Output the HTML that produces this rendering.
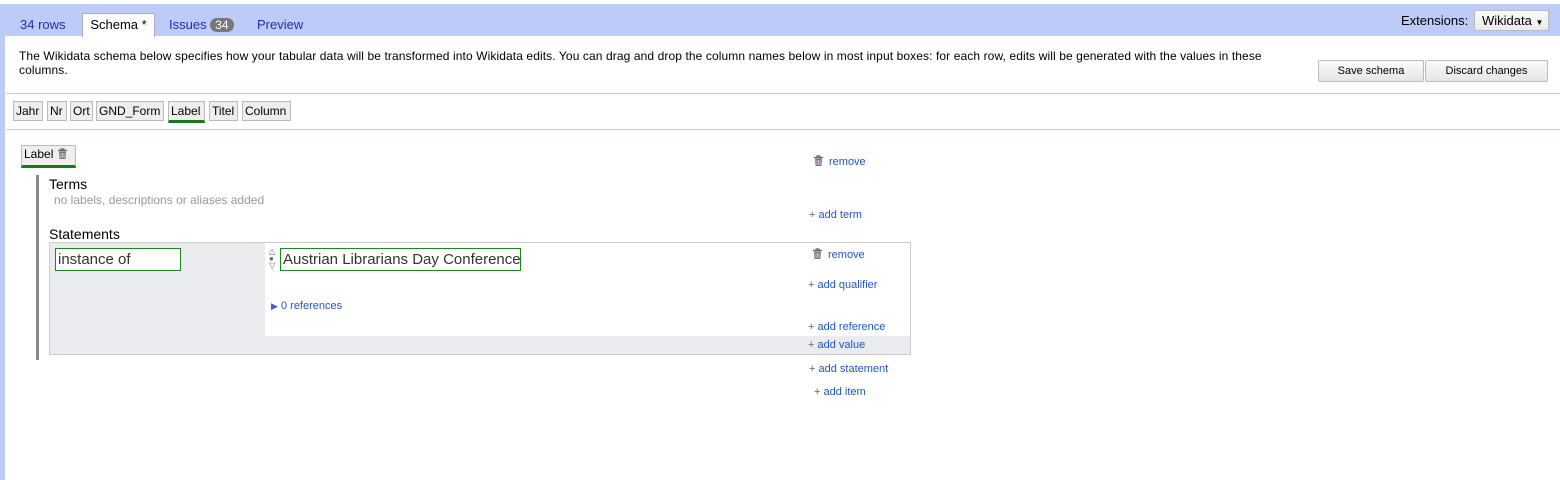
<!DOCTYPE html><html><head><style>
body{margin:0;width:1560px;height:480px;position:relative;overflow:hidden;background:#fff;font-family:"Liberation Sans",sans-serif;}
.a{position:absolute;white-space:nowrap}
.l{font-size:11px;color:#1f56c2}
.p{color:#666}
.chip{position:absolute;top:101px;height:20px;border:1px solid #bbb;background:#eee;font-size:12px;line-height:18px;padding:0 2px;box-sizing:border-box}
.btn{position:absolute;top:60px;height:22px;border:1px solid #bbb;border-radius:2px;background:linear-gradient(#fafafa,#e6e6e6);font-size:11px;line-height:20px;text-align:center;box-sizing:border-box}
svg.t{vertical-align:-2px;margin-right:5px}
</style></head><body>
<svg width="0" height="0" style="position:absolute"><defs><g id="tr"><path d="M1 2.5h9M4 2.5V1h3v1.5" stroke="#666" stroke-width="1.2" fill="none"/><path d="M2 3.5h7l-0.6 7.5h-5.8z" fill="#777"/><path d="M4 5v5M5.5 5v5M7 5v5" stroke="#ddd" stroke-width="0.7"/></g></defs></svg>
<div class="a" style="left:0;top:4px;width:1560px;height:32px;background:#bccbf7"></div>
<div class="a" style="left:0;top:36px;width:5px;height:444px;background:#bccbf7"></div>
<div class="a" style="left:20px;top:17px;font-size:13px;color:#2a2ab0">34 rows</div>
<div class="a" style="left:82px;top:13px;width:73px;height:24px;background:#fff;border:1px solid #aab;border-bottom:none;box-sizing:border-box;font-size:13px;line-height:22px;text-align:center">Schema *</div>
<div class="a" style="left:169px;top:17px;font-size:13px;color:#2a2ab0">Issues <span style="background:#777;color:#fff;border-radius:8px;padding:0 5px;font-size:12px">34</span></div>
<div class="a" style="left:257px;top:17px;font-size:13px;color:#2a2ab0">Preview</div>
<div class="a" style="left:1401px;top:13px;font-size:13px">Extensions:</div>
<div class="a" style="left:1474px;top:10px;width:75px;height:21px;border:1px solid #bbb;border-radius:2px;background:linear-gradient(#fafafa,#eaeaea);box-sizing:border-box;font-size:13px;line-height:19px;padding-left:7px">Wikidata <span style="font-size:8px">▼</span></div>
<div class="a" style="left:19px;top:49px;font-size:12px;line-height:14px;letter-spacing:0.1px">The Wikidata schema below specifies how your tabular data will be transformed into Wikidata edits. You can drag and drop the column names below in most input boxes: for each row, edits will be generated with the values in these<br>columns.</div>
<div class="btn" style="left:1318px;width:106px">Save schema</div>
<div class="btn" style="left:1425px;width:123px">Discard changes</div>
<div class="a" style="left:6px;top:93px;width:1554px;height:1px;background:#bccbf7"></div>
<div class="chip" style="left:13px;width:30px">Jahr</div>
<div class="chip" style="left:47px;width:20px">Nr</div>
<div class="chip" style="left:70px;width:23px">Ort</div>
<div class="chip" style="left:96px;width:68px">GND_Form</div>
<div class="chip" style="left:168px;width:37px;border-bottom:3px solid #1a7a1a;height:22px">Label</div>
<div class="chip" style="left:209px;width:29px">Titel</div>
<div class="chip" style="left:242px;width:49px">Column</div>
<div class="a" style="left:6px;top:129px;width:1554px;height:1px;background:#bccbf7"></div>
<div class="a" style="left:21px;top:145px;width:55px;height:23px;border:1px solid #bbb;border-bottom:3px solid #1a7a1a;background:#eee;box-sizing:border-box;font-size:12px;line-height:16px;padding-left:2px">Label <svg class="t" width="11" height="12"><use href="#tr"/></svg></div>
<div class="a" style="left:36px;top:175px;width:3px;height:185px;background:#888"></div>
<div class="a l" style="left:813px;top:155px"><svg class="t" width="11" height="12"><use href="#tr"/></svg>remove</div>
<div class="a" style="left:49px;top:176px;font-size:14px">Terms</div>
<div class="a" style="left:54px;top:193px;font-size:12px;color:#999">no labels, descriptions or aliases added</div>
<div class="a l" style="left:809px;top:209px"><span class="p">+</span> add term</div>
<div class="a" style="left:49px;top:226px;font-size:14px">Statements</div>
<div class="a" style="left:49px;top:242px;width:862px;height:113px;border:1px solid #ccc;background:#eaebee;box-sizing:border-box"></div>
<div class="a" style="left:265px;top:243px;width:645px;height:93px;background:#fff"></div>
<div class="a" style="left:55px;top:248px;width:126px;height:23px;border:1px solid #1a8a1a;background:#fff;box-sizing:border-box;font-size:15px;line-height:21px;padding-left:2px;color:#333">instance of</div>
<div class="a" style="left:269px;top:248px;font-size:8px;line-height:7px;color:#666">△<br>●<br>▽</div>
<div class="a" style="left:280px;top:248px;width:241px;height:23px;border:1px solid #1a8a1a;background:#fff;box-sizing:border-box;font-size:15px;line-height:21px;padding-left:2px;overflow:hidden;color:#333">Austrian Librarians Day Conference</div>
<div class="a l" style="left:812px;top:248px"><svg class="t" width="11" height="12"><use href="#tr"/></svg>remove</div>
<div class="a l" style="left:808px;top:279px"><span class="p">+</span> add qualifier</div>
<div class="a l" style="left:271px;top:300px"><span style="font-size:9px;color:#55c">▶</span> 0 references</div>
<div class="a l" style="left:808px;top:321px"><span class="p">+</span> add reference</div>
<div class="a l" style="left:808px;top:339px"><span class="p">+</span> add value</div>
<div class="a l" style="left:809px;top:363px"><span class="p">+</span> add statement</div>
<div class="a l" style="left:814px;top:386px"><span class="p">+</span> add item</div>
</body></html>
